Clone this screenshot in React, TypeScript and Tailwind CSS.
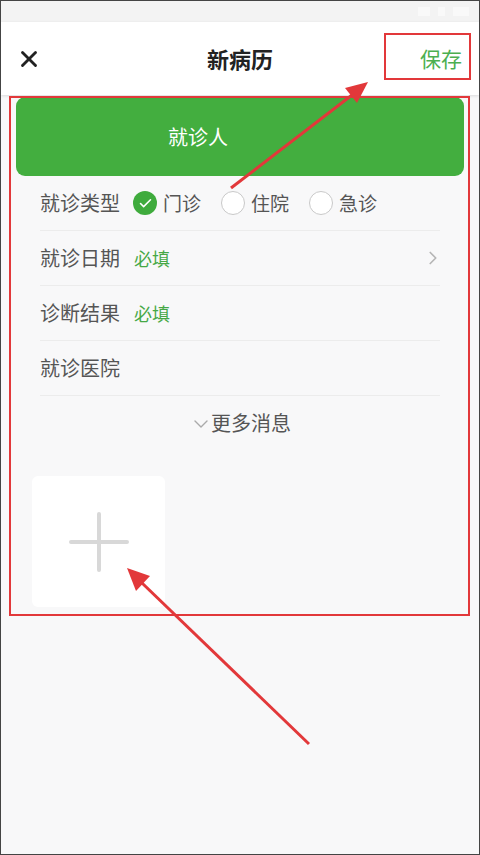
import React from 'react';
import { X, ChevronRight, ChevronDown, Check } from 'lucide-react';

const cjk = { fontFamily: '"Noto Sans CJK SC", "Noto Sans", sans-serif' };

const Radio = ({ checked, label }: { checked?: boolean; label: string }) => (
  <div className="flex items-center">
    {checked ? (
      <div className="w-[24px] h-[24px] rounded-full bg-[#3fab3d] flex items-center justify-center">
        <Check className="w-[15px] h-[15px] text-white" strokeWidth={2.5} />
      </div>
    ) : (
      <div className="w-[24px] h-[24px] rounded-full border-[1.5px] border-[#c9c9c9] bg-white" />
    )}
    <span className="ml-[6px] text-[19px] text-[#555]">{label}</span>
  </div>
);

const Row = ({ label, children }: { label: string; children?: React.ReactNode }) => (
  <div className="h-[55px] flex items-center border-b border-[#ececec]">
    <span className="text-[20px] text-[#555] leading-none">{label}</span>
    {children}
  </div>
);

const App = () => {
  return (
    <div
      className="relative w-[480px] h-[855px] overflow-hidden border border-[#444] bg-[#f8f8f9]"
      style={cjk}
    >
      {/* status bar */}
      <div className="h-[21px] bg-[#f3f3f3] flex items-center justify-end pr-[10px] gap-[8px]">
        <div className="w-[12px] h-[9px] bg-white/50" />
        <div className="w-[7px] h-[9px] bg-white/50" />
        <div className="w-[16px] h-[9px] bg-white/50" />
      </div>

      {/* header */}
      <div className="relative h-[73px] bg-white flex items-center justify-between pl-[15px] pr-[17px] shadow-[0_1px_3px_rgba(0,0,0,0.12)] z-10">
        <X className="w-[26px] h-[26px] text-[#222]" strokeWidth={2.6} />
        <span className="absolute left-0 right-0 text-center text-[22px] font-bold text-[#222] pointer-events-none">
          新病历
        </span>
        <span className="text-[21px] text-[#4caf50]">保存</span>
      </div>

      {/* patient button */}
      <div className="mx-[15px] mt-[2px] h-[79px] rounded-[9px] bg-[#43ae3f] flex items-center pl-[152px]">
        <span className="text-[20px] text-white">就诊人</span>
      </div>

      {/* form rows */}
      <div className="pl-[39px] pr-[39px]">
        <Row label="就诊类型">
          <div className="flex items-center ml-[13px] gap-[20px]">
            <Radio checked label="门诊" />
            <Radio label="住院" />
            <Radio label="急诊" />
          </div>
        </Row>
        <Row label="就诊日期">
          <span className="ml-[14px] text-[18px] text-[#46a846]">必填</span>
          <ChevronRight className="ml-auto -mr-[4px] w-[22px] h-[22px] text-[#b5b5b5]" strokeWidth={1.8} />
        </Row>
        <Row label="诊断结果">
          <span className="ml-[14px] text-[18px] text-[#46a846]">必填</span>
        </Row>
        <Row label="就诊医院" />
        <div className="h-[54px] flex items-center justify-center">
          <ChevronDown className="w-[24px] h-[24px] text-[#aaa] -mr-[2px] mt-[2px]" strokeWidth={1.4} />
          <span className="text-[20px] text-[#555]">更多消息</span>
        </div>
      </div>

      {/* add photo */}
      <div className="pl-[31px] mt-[26px]">
        <div className="w-[133px] h-[131px] rounded-[6px] bg-white flex items-center justify-center">
          <svg width="62" height="62" viewBox="0 0 62 62">
            <path d="M31 3 V59 M3 31 H59" stroke="#d8d8d8" strokeWidth="4" strokeLinecap="round" />
          </svg>
        </div>
      </div>

      {/* annotations */}
      <div className="absolute left-[383px] top-[32px] w-[87px] h-[47px] border-2 border-[#e2383a] z-20" />
      <div className="absolute left-[8px] top-[95px] w-[461px] h-[520px] border-2 border-[#e2383a] z-20" />
      <svg className="absolute inset-0 z-20 pointer-events-none" width="480" height="855" viewBox="0 0 480 855">
        <line x1="230" y1="187" x2="351" y2="94" stroke="#e2383a" strokeWidth="3" />
        <polygon points="367,81 356,102 344,87" fill="#e2383a" />
        <line x1="308" y1="743" x2="141" y2="582" stroke="#e2383a" strokeWidth="3" />
        <polygon points="126,567 149,575 135,590" fill="#e2383a" />
      </svg>
    </div>
  );
};

export default App;
